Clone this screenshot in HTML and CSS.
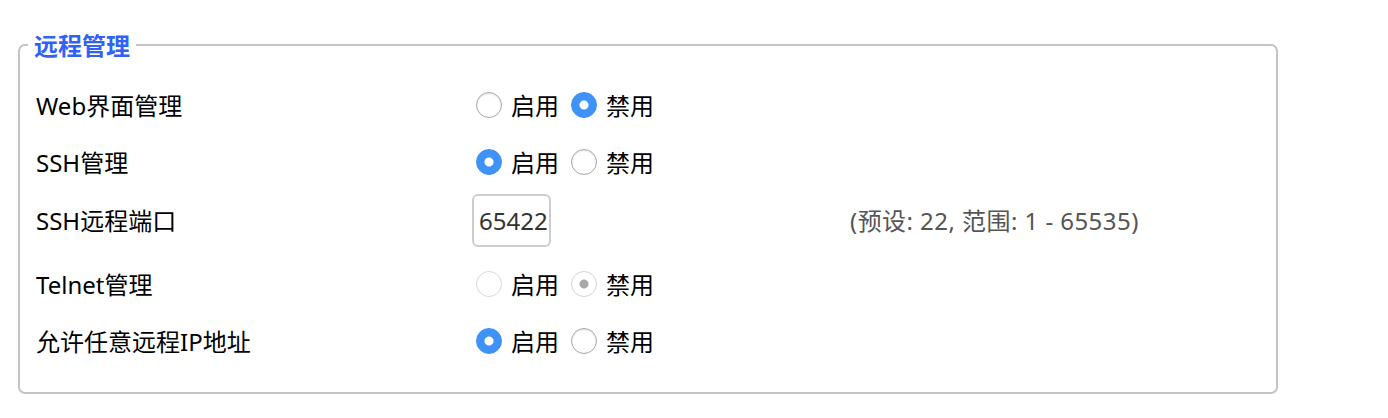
FILE: index.html
```html
<!DOCTYPE html>
<html lang="zh-CN">
<head>
  <meta charset="UTF-8" />
  <title>远程管理</title>
  <link rel="stylesheet" href="styles.css">
</head>
<body>
  <fieldset class="panel">
    <legend>远程管理</legend>

    <div class="row">
      <label class="name">Web界面管理</label>
      <div class="choice">
        <label><input type="radio" name="web" /> 启用</label>
        <label><input type="radio" name="web" checked /> 禁用</label>
      </div>
    </div>

    <div class="row">
      <label class="name">SSH管理</label>
      <div class="choice">
        <label><input type="radio" name="ssh" checked /> 启用</label>
        <label><input type="radio" name="ssh" /> 禁用</label>
      </div>
    </div>

    <div class="row row-input">
      <label class="name">SSH远程端口</label>
      <div class="choice">
        <input type="text" class="port" value="65422" />
      </div>
      <span class="hint">(预设: 22, 范围: 1 - 65535)</span>
    </div>

    <div class="row">
      <label class="name">Telnet管理</label>
      <div class="choice">
        <label><input type="radio" name="telnet" disabled /> 启用</label>
        <label><input type="radio" name="telnet" checked disabled /> 禁用</label>
      </div>
    </div>

    <div class="row">
      <label class="name">允许任意远程IP地址</label>
      <div class="choice">
        <label><input type="radio" name="anyip" checked /> 启用</label>
        <label><input type="radio" name="anyip" /> 禁用</label>
      </div>
    </div>
  </fieldset>
</body>
</html>
```

FILE: styles.css
```css
body {
  font-family: 'Noto Sans', 'Noto Sans CJK SC', sans-serif;
  font-size: 24px;
  color: #000;
  background: #fff;
  margin: 0;
  padding: 27px 0 0 18px;
}
.panel {
  width: 1224px;
  margin: 0;
  padding: 14px 16px 23px 16px;
  border: 2px solid #c4c4c4;
  border-radius: 7px;
}
.panel legend {
  color: #2f62f5;
  font-weight: bold;
  font-size: 24px;
  padding: 0 6px;
  margin-left: -8px;
}
.row {
  display: grid;
  grid-template-columns: 436px 378px auto;
  align-items: center;
  height: 57px;
}
.row-input {
  height: 65px;
  align-items: start;
}
.row-input .name,
.row-input .hint {
  margin-top: 12px;
}
.choice {
  display: flex;
  align-items: center;
}
.choice label {
  display: flex;
  align-items: center;
  gap: 9px;
  margin-left: 4px;
  margin-right: 8px;
}
.choice input[type=radio] {
  appearance: none;
  -webkit-appearance: none;
  width: 26px;
  height: 26px;
  margin: 0;
  border-radius: 50%;
  border: 1px solid #a8a8a8;
  background: #fff;
  box-shadow: inset 0 1px 2px rgba(0, 0, 0, 0.12);
}
.choice input[type=radio]:checked {
  border-color: #3b8ef6;
  background: radial-gradient(circle, #fff 0 4px, #3f93f8 5px);
  box-shadow: none;
}
.choice input[type=radio]:disabled {
  border-color: #dadada;
  background: #fff;
  box-shadow: none;
}
.choice input[type=radio]:disabled:checked {
  border-color: #d4d4d4;
  background: radial-gradient(circle, #a8a8a8 0 4px, #fff 5px);
}
.port {
  width: 79px;
  height: 53px;
  box-sizing: border-box;
  margin: 4px 0 0 0;
  padding: 0 0 0 5px;
  border: 2px solid #cdcdcd;
  border-radius: 6px;
  font-family: inherit;
  font-size: 24px;
  color: #333;
}
.hint {
  color: #555;
  letter-spacing: 0.45px;
}
```
